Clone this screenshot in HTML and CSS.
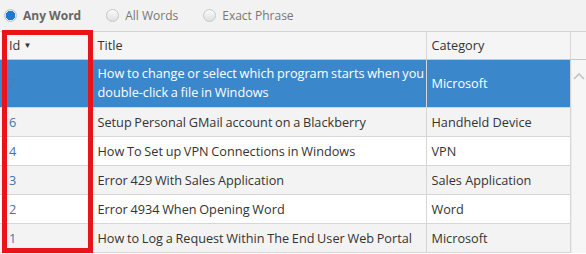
FILE: index.html
```html
<!DOCTYPE html>
<html lang="en">
<head>
    <meta charset="UTF-8">
    <title>Knowledge Base Search</title>
    <link rel="stylesheet" href="styles.css">
</head>
<body>
    <div class="search-options">
        <label class="radio checked"><span class="radio-dot"></span>Any Word</label>
        <label class="radio"><span class="radio-dot"></span>All Words</label>
        <label class="radio"><span class="radio-dot"></span>Exact Phrase</label>
    </div>

    <div class="grid">
        <table class="grid-head">
            <tr>
                <th class="col-id">Id <span class="sort">&#9660;</span></th>
                <th class="col-title">Title</th>
                <th class="col-cat">Category</th>
                <th class="col-scroll"></th>
            </tr>
        </table>

        <div class="grid-body">
            <table class="rows">
                <tr class="selected">
                    <td class="col-id"><a>7</a></td>
                    <td class="col-title">How to change or select which program starts when you double-click a file in Windows</td>
                    <td class="col-cat">Microsoft</td>
                </tr>
                <tr class="alt">
                    <td class="col-id"><a>6</a></td>
                    <td class="col-title">Setup Personal GMail account on a Blackberry</td>
                    <td class="col-cat">Handheld Device</td>
                </tr>
                <tr>
                    <td class="col-id"><a>4</a></td>
                    <td class="col-title">How To Set up VPN Connections in Windows</td>
                    <td class="col-cat">VPN</td>
                </tr>
                <tr class="alt">
                    <td class="col-id"><a>3</a></td>
                    <td class="col-title">Error 429 With Sales Application</td>
                    <td class="col-cat">Sales Application</td>
                </tr>
                <tr>
                    <td class="col-id"><a>2</a></td>
                    <td class="col-title">Error 4934 When Opening Word</td>
                    <td class="col-cat">Word</td>
                </tr>
                <tr class="alt">
                    <td class="col-id"><a>1</a></td>
                    <td class="col-title">How to Log a Request Within The End User Web Portal</td>
                    <td class="col-cat">Microsoft</td>
                </tr>
            </table>
            <div class="scrollbar">
                <svg class="scroll-up" width="12" height="8" viewBox="0 0 12 8">
                    <path d="M1 7 L6 2 L11 7" fill="none" stroke="#c4c4c4" stroke-width="1.6"/>
                </svg>
            </div>
        </div>

        <div class="highlight"></div>
    </div>
</body>
</html>
```

FILE: styles.css
```css
* {
    margin: 0;
    padding: 0;
    box-sizing: border-box;
}

body {
    font-family: "Open Sans", sans-serif;
    font-size: 12.7px;
    color: #333;
    background: #fff;
    width: 586px;
    height: 254px;
    overflow: hidden;
}

/* search mode radios */
.search-options {
    height: 32px;
    background: #f2f2f2;
    border-bottom: 1px solid #d4d4d4;
    display: flex;
    align-items: center;
    padding-left: 4px;
    padding-bottom: 1px;
    color: #777;
    font-size: 12px;
}

.radio {
    display: flex;
    align-items: center;
    margin-right: 25px;
}

.radio.checked {
    font-weight: bold;
    color: #666;
}

.radio-dot {
    width: 13px;
    height: 13px;
    border-radius: 50%;
    border: 1px solid #c6c6c6;
    background: linear-gradient(#fafafa, #e0e0e0);
    margin-right: 6px;
}

.radio.checked .radio-dot {
    border-color: #a8c8e8;
    background: radial-gradient(circle, #1f78d1 0, #1f78d1 4.5px, #dfeaf5 5px);
}

/* grid */
.grid {
    position: relative;
}

table {
    border-collapse: collapse;
    table-layout: fixed;
}

.grid-head {
    width: 586px;
    background: #f5f5f5;
}

.grid-head th {
    height: 27px;
    font-weight: normal;
    text-align: left;
    padding: 0 2px 0 5px;
    border-bottom: 1px solid #c8c8c8;
    border-right: 1px solid #d8d8d8;
}

.grid-head th.col-id,
.rows td.col-id {
    padding-left: 9px;
}

.grid-head th.col-scroll {
    border-right: none;
}

.sort {
    font-size: 8px;
    vertical-align: 2px;
}

.col-id { width: 92px; }
.col-title { width: 334px; }
.col-cat { width: 144px; }
.col-scroll { width: 16px; }

.grid-body {
    display: flex;
}

.rows {
    width: 570px;
}

.rows td {
    height: 29px;
    padding: 0 0 0 5px;
    border-bottom: 1px solid #d6d6d6;
    border-right: 1px solid #d6d6d6;
    line-height: 19px;
}

.rows td.col-title {
    word-spacing: -0.6px;
}

.rows tr.alt td {
    background: #f3f3f3;
}

.rows a {
    color: #3b76b4;
}

.rows tr.selected td {
    height: 48px;
    background: #3b87cc;
    color: #fff;
}

.rows tr.selected a {
    color: #4b7fb0;
}

.scrollbar {
    width: 16px;
    background: #f6f6f6;
    border-left: 1px solid #ececec;
    display: flex;
    justify-content: center;
    padding-top: 12px;
}

.scroll-up {
    display: block;
}

/* red annotation box around the Id column */
.highlight {
    position: absolute;
    left: 2px;
    top: -2px;
    width: 91px;
    height: 223px;
    border: 5px solid #e8131b;
    pointer-events: none;
}
```
